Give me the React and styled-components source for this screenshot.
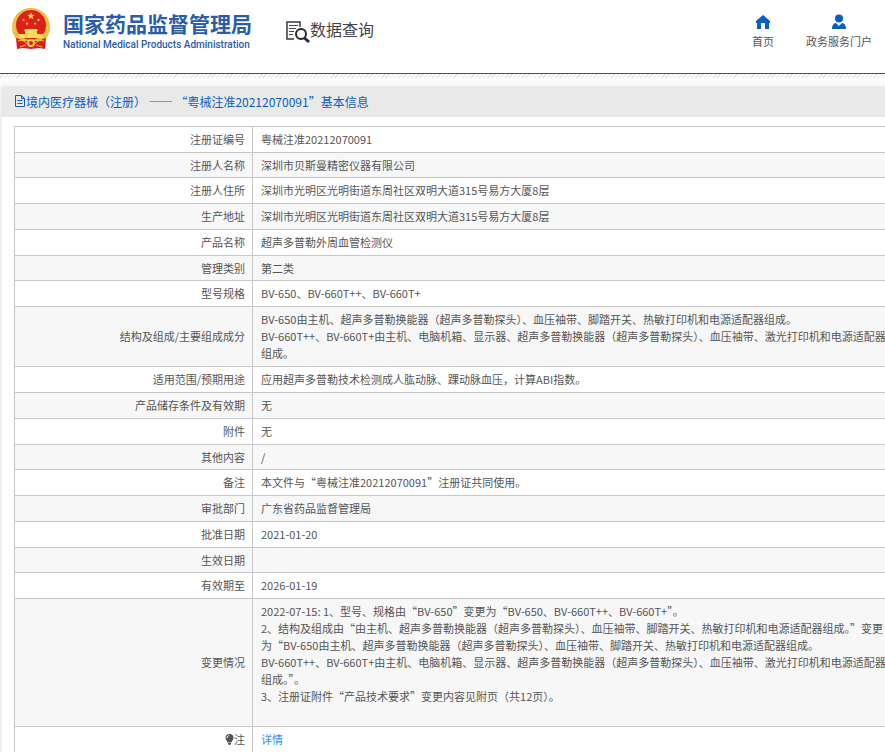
import React from "react";
import styled, { createGlobalStyle } from "styled-components";

const GlobalStyle = createGlobalStyle`
  * {
    box-sizing: border-box;
  }
  body {
    margin: 0;
    overflow-x: hidden;
    background: #fff;
    color: #555;
    font-family: "Noto Sans CJK SC", "Noto Sans", sans-serif;
    font-size: 11px;
    line-height: 17px;
  }
`;

const Header = styled.header`
  display: flex;
  align-items: flex-start;
  height: 73px;
  padding: 8px 13px 0 11px;
`;

const Brand = styled.a`
  display: flex;
  gap: 12px;
  color: #2a5caa;
  text-decoration: none;
`;

const BrandText = styled.div`
  display: flex;
  flex-direction: column;
  padding-top: 1px;
`;

const BrandName = styled.span`
  font-size: 21px;
  font-weight: 700;
  line-height: 28px;
`;

const BrandSub = styled.span`
  font-family: Roboto, sans-serif;
  font-size: 10px;
  font-weight: 500;
  line-height: 16px;
`;

const Section = styled.div`
  display: flex;
  align-items: flex-start;
  margin-left: 33px;
  padding-top: 9px;
  color: #444;
  font-size: 16px;
  line-height: 24px;

  svg {
    margin-top: 3px;
  }
`;

const Nav = styled.nav`
  display: flex;
  gap: 32px;
  margin-left: auto;
  padding-top: 6px;
`;

const NavLink = styled.a`
  display: flex;
  flex-direction: column;
  align-items: center;
  gap: 3px;
  color: #555;
  text-decoration: none;
`;

const Stripe = styled.div`
  height: 5px;
  border-top: 1px solid #0a5fb8;
  background: repeating-linear-gradient(135deg, #fff 0 2px, #e2e2e2 2px 3px);
`;

const Main = styled.main`
  padding: 9px 0 0 2px;
  background: linear-gradient(#fff, #f6f6f6 9px);
`;

const Panel = styled.section`
  background: #fff;
  box-shadow: 0 0 3px #ddd;
`;

const PanelTitle = styled.h1`
  display: flex;
  align-items: center;
  height: 30px;
  margin: 0;
  padding: 0 0 2px 13px;
  background: #e9e9e9;
  color: #0a5fc0;
  font-size: 12px;
  font-weight: 400;
  text-spacing-trim: space-all;
`;

const PanelBody = styled.div`
  margin-right: -10px;
  padding: 9px 0 0 12px;
`;

const Table = styled.table`
  width: 100%;
  border-collapse: collapse;

  tr:nth-child(even) {
    background: #f7f7f7;
  }
  tr:nth-child(10n + 2),
  tr:nth-child(10n + 6) {
    line-height: 16px;
  }
`;

const Label = styled.th`
  width: 238px;
  padding: 4px 7px;
  border: 1px solid #c8c8c8;
  font-weight: 400;
  text-align: right;

  svg {
    vertical-align: -1px;
  }
`;

const Value = styled.td`
  height: 25px;
  padding: 4px 8px;
  border: 1px solid #c8c8c8;
  white-space: pre-line;
`;

const DetailLink = styled.a`
  color: #2e8ded;
  text-decoration: none;
`;

const rows = [
  ["注册证编号", "粤械注准20212070091"],
  ["注册人名称", "深圳市贝斯曼精密仪器有限公司"],
  ["注册人住所", "深圳市光明区光明街道东周社区双明大道315号易方大厦8层"],
  ["生产地址", "深圳市光明区光明街道东周社区双明大道315号易方大厦8层"],
  ["产品名称", "超声多普勒外周血管检测仪"],
  ["管理类别", "第二类"],
  ["型号规格", "BV-650、BV-660T++、BV-660T+"],
  [
    "结构及组成/主要组成成分",
    "BV-650由主机、超声多普勒换能器（超声多普勒探头）、血压袖带、脚踏开关、热敏打印机和电源适配器组成。\nBV-660T++、BV-660T+由主机、电脑机箱、显示器、超声多普勒换能器（超声多普勒探头）、血压袖带、激光打印机和电源适配器组成。",
  ],
  ["适用范围/预期用途", "应用超声多普勒技术检测成人肱动脉、踝动脉血压，计算ABI指数。"],
  ["产品储存条件及有效期", "无"],
  ["附件", "无"],
  ["其他内容", "/"],
  ["备注", "本文件与“粤械注准20212070091”注册证共同使用。"],
  ["审批部门", "广东省药品监督管理局"],
  ["批准日期", "2021-01-20"],
  ["生效日期", ""],
  ["有效期至", "2026-01-19"],
  [
    "变更情况",
    "2022-07-15: 1、型号、规格由“BV-650”变更为“BV-650、BV-660T++、BV-660T+”。\n2、结构及组成由“由主机、超声多普勒换能器（超声多普勒探头）、血压袖带、脚踏开关、热敏打印机和电源适配器组成。”变更为“BV-650由主机、超声多普勒换能器（超声多普勒探头）、血压袖带、脚踏开关、热敏打印机和电源适配器组成。\nBV-660T++、BV-660T+由主机、电脑机箱、显示器、超声多普勒换能器（超声多普勒探头）、血压袖带、激光打印机和电源适配器组成。”。\n3、注册证附件“产品技术要求”变更内容见附页（共12页）。\n\n",
  ],
];

const STAR = "M0-1 .24-.31.95-.31.38.12.59.81 0 .4-.59.81-.38.12-.95-.31-.24-.31z";

function Emblem() {
  return (
    <svg width="40" height="42" viewBox="0 0 40 42" aria-hidden="true">
      <circle cx="20" cy="19" r="19" fill="#edb93a" />
      <circle cx="20" cy="19" r="17" fill="none" stroke="#f8dc70" strokeWidth="1" strokeDasharray="2 1" />
      <circle cx="20" cy="17" r="15" fill="#de2118" />
      <path d="M5 30q3 0 6 3h18q3-3 6-3l-1 11-6-1-8 1-8-1-6 1z" fill="#d7201c" />
      <g fill="#f8d95a">
        <path d={STAR} transform="translate(20 8) scale(4)" />
        <path d={STAR} transform="translate(12.5 12) scale(1.7)" />
        <path d={STAR} transform="translate(27.5 12) scale(1.7)" />
        <path d={STAR} transform="translate(16 15.5) scale(1.7)" />
        <path d={STAR} transform="translate(24 15.5) scale(1.7)" />
        <path d="M14 21h12l1 2h-1v3h6v4H8v-4h6v-3h-1z" />
      </g>
      <path
        d="M7 33q6-2 9 3M33 33q-6-2-9 3M9 39l6-2M31 39l-6-2"
        fill="none"
        stroke="#edbd43"
      />
      <circle cx="20" cy="35" r="3" fill="#d7201c" stroke="#f3c84c" strokeWidth="2" />
    </svg>
  );
}

function SearchDocIcon() {
  return (
    <svg width="25" height="24" viewBox="0 0 25 24" fill="none" aria-hidden="true">
      <path d="M15 7V2H2v17h7" stroke="#333846" strokeWidth="1.500" />
      <path d="M4 5.500h9M4 8.500h7M4 11.500h5M4 14.500h4" stroke="#444" />
      <circle cx="16" cy="14" r="5" stroke="#22263a" strokeWidth="2" />
      <path d="m19.500 18 4.500 4" stroke="#22263a" strokeWidth="3" />
    </svg>
  );
}

function HomeIcon() {
  return (
    <svg width="16" height="16" viewBox="0 0 16 16" fill="#0560c2" aria-hidden="true">
      <path d="M8 1 1 7v2h1v6h4V9h4v6h4V9h1V7z" />
    </svg>
  );
}

function UserIcon() {
  return (
    <svg width="16" height="16" viewBox="0 0 16 16" fill="#0560c2" aria-hidden="true">
      <circle cx="8" cy="4.500" r="4" />
      <path d="M1 15c0-4 2-6 4-6l3 3 3-3c2 0 4 2 4 6z" />
    </svg>
  );
}

function DocIcon() {
  return (
    <svg width="11" height="12" viewBox="0 0 11 12" fill="none" stroke="#0a5fc0" aria-hidden="true">
      <path d="M.5.500H6.500L9.500 3.500v8h-9zM6.500.500v3h3M2.500 5.500h5M2.500 8.500h5" />
    </svg>
  );
}

function BulbIcon() {
  return (
    <svg width="9" height="11" viewBox="0 0 9 11" fill="#555" aria-hidden="true">
      <path d="M4.500 0a4 4 0 0 1 4 4c0 2-2 3-2 4.500h-4C2.500 7 .5 6 .5 4a4 4 0 0 1 4-4zM3 9h3v1L5 11H4L3 10z" />
      <path d="M2 4q0-2 2-2.500" fill="none" stroke="#fff" />
    </svg>
  );
}

function App() {
  return (
    <div lang="zh-CN">
      <GlobalStyle />
      <Header>
        <Brand href="#">
          <Emblem />
          <BrandText>
            <BrandName>国家药品监督管理局</BrandName>
            <BrandSub>National Medical Products Administration</BrandSub>
          </BrandText>
        </Brand>
        <Section>
          <SearchDocIcon />
          数据查询
        </Section>
        <Nav>
          <NavLink href="#">
            <HomeIcon />
            首页
          </NavLink>
          <NavLink href="#">
            <UserIcon />
            政务服务门户
          </NavLink>
        </Nav>
      </Header>
      <Stripe />
      <Main>
        <Panel>
          <PanelTitle>
            <DocIcon />
            境内医疗器械（注册） —— “粤械注准20212070091”基本信息
          </PanelTitle>
          <PanelBody>
            <Table>
              <tbody>
                {rows.map(([label, value]) => (
                  <tr key={label}>
                    <Label scope="row">{label}</Label>
                    <Value>{value}</Value>
                  </tr>
                ))}
                <tr>
                  <Label scope="row">
                    <BulbIcon />注
                  </Label>
                  <Value>
                    <DetailLink href="#">详情</DetailLink>
                  </Value>
                </tr>
              </tbody>
            </Table>
          </PanelBody>
        </Panel>
      </Main>
    </div>
  );
}

export default App;
